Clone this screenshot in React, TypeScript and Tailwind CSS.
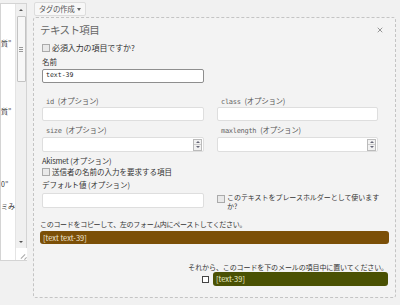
import { X } from "lucide-react";

const jp = { fontFamily: '"Noto Sans CJK JP", "Liberation Sans", sans-serif' };

function Check({ className = "" }: { className?: string }) {
  return <span className={"inline-block w-[8px] h-[8px] border border-[#aaa] bg-[#e9e9e9] shrink-0 " + className} />;
}

function Spinner() {
  return (
    <div className="ml-auto mr-[1px] flex flex-col w-[9px] h-[12px] border border-[#bbb] bg-[#f2f2f2]">
      <div className="flex-1 flex items-center justify-center border-b border-[#ccc]">
        <span className="w-0 h-0 border-l-[2px] border-r-[2px] border-b-[2px] border-l-transparent border-r-transparent border-b-[#667]" />
      </div>
      <div className="flex-1 flex items-center justify-center">
        <span className="w-0 h-0 border-l-[2px] border-r-[2px] border-t-[2px] border-l-transparent border-r-transparent border-t-[#667]" />
      </div>
    </div>
  );
}

function Field({ h = 14, spin = false }: { h?: number; spin?: boolean }) {
  return (
    <div
      className={
        "flex items-center bg-white border border-[#dedede] rounded-[2px] " + (h === 15 ? "h-[15px]" : "h-[14px]")
      }
    >
      {spin && <Spinner />}
    </div>
  );
}

function Label({ code }: { code: string }) {
  return (
    <div className="h-[10px] leading-[10px] text-[7.5px] text-[#555] tracking-[-0.3px] whitespace-nowrap pl-[4px]">
      <span style={{ fontFamily: '"DejaVu Sans Mono", monospace' }} className="text-[7px] text-[#666] mr-[4px]">
        {code}
      </span>
      (オプション)
    </div>
  );
}

function SideTextarea() {
  // 左側のテキストエリア（右端だけ見えている）
  const lines = [
    { y: "mt-[34px]", t: "質\u201d" },
    { y: "mt-[58px]", t: "質\u201d" },
    { y: "mt-[63px]", t: "0\u201d" },
    { y: "mt-[12px]", t: "ミみ" },
  ];
  return (
    <div className="relative w-[27px] h-[258px] mt-[3px] bg-white border border-[#d4d4d4] flex">
      <div className="w-[15px] overflow-hidden text-[7px] text-[#333] flex flex-col">
        {lines.map((l, i) => (
          <div key={i} className={"h-[10px] leading-[10px] whitespace-nowrap " + l.y}>
            {l.t}
          </div>
        ))}
      </div>
      <div className="w-[11px] bg-[#f0f0f0] border-l border-[#e4e4e4] flex flex-col items-center">
        <div className="h-[12px] flex items-center justify-center">
          <span className="w-0 h-0 border-l-[2px] border-r-[2px] border-b-[2px] border-l-transparent border-r-transparent border-b-[#555]" />
        </div>
        <div className="w-[9px] h-[66px] bg-[#f7f7f7] border border-[#c3c3c3] rounded-[1px] flex flex-col items-center justify-center gap-[1px]">
          <span className="w-[4px] h-px bg-[#999]" />
          <span className="w-[4px] h-px bg-[#999]" />
          <span className="w-[4px] h-px bg-[#999]" />
        </div>
        <div className="flex-1" />
        <div className="h-[12px] flex items-center justify-center">
          <span className="w-0 h-0 border-l-[2px] border-r-[2px] border-t-[2px] border-l-transparent border-r-transparent border-t-[#555]" />
        </div>
        <div className="h-[12px] w-[11px] bg-white relative overflow-hidden">
          <span className="absolute right-[1px] bottom-[3px] w-[6px] h-px bg-[#aaa] -rotate-45" />
          <span className="absolute right-[0px] bottom-[1px] w-[3px] h-px bg-[#aaa] -rotate-45" />
        </div>
      </div>
    </div>
  );
}

export default function App() {
  return (
    <div className="w-[400px] h-[305px] bg-[#f1f1f1] flex overflow-hidden text-[#333]" style={jp}>
      <SideTextarea />
      <div className="ml-[6px] w-[363px] flex flex-col">
        <div className="mt-[2px] ml-[1px] h-[14px] w-[52px] flex items-center justify-center gap-[3px] bg-[#f7f7f7] border border-[#ddd] rounded-[2px] text-[7.5px] text-[#555] tracking-[-0.4px]">
          タグの作成
          <span className="w-0 h-0 border-l-[2px] border-r-[2px] border-t-[3px] border-l-transparent border-r-transparent border-t-[#666]" />
        </div>
        <div className="mt-[1px] h-[281px] border border-dashed border-[#c4c4c4] rounded-[3px] bg-[#f3f3f3] flex flex-col pl-[6px] pr-[6px]">
          <div className="mt-[5px] h-[14px] flex items-center">
            <span className="text-[10.5px] leading-[14px] text-[#666] tracking-[-0.6px]">テキスト項目</span>
            <X className="ml-auto mr-[5px] w-[8px] h-[8px] text-[#666]" strokeWidth={2} />
          </div>
          <div className="mt-[6px] h-[10px] ml-[2px] flex items-center gap-[2px] text-[8px] tracking-[-0.1px] whitespace-nowrap">
            <Check />
            必須入力の項目ですか?
          </div>
          <div className="mt-[4px] h-[10px] leading-[10px] ml-[2px] text-[7.5px]">名前</div>
          <div className="mt-[2px] ml-[2px] w-[162px] h-[14px] bg-white border border-[#8e8e8e] rounded-[2px] flex items-center pl-[3px] text-[6.5px] text-[#222]" style={{ fontFamily: '"DejaVu Sans Mono", monospace' }}>
            text-39
          </div>
          <div className="mt-[13px] ml-[2px] grid grid-cols-[162px_161px] gap-x-[13px]">
            <Label code="id" />
            <Label code="class" />
            <div className="mt-[1px]"><Field /></div>
            <div className="mt-[1px]"><Field /></div>
            <div className="mt-[4px]"><Label code="size" /></div>
            <div className="mt-[4px]"><Label code="maxlength" /></div>
            <div className="mt-[2px]"><Field h={15} spin /></div>
            <div className="mt-[2px]"><Field h={15} spin /></div>
          </div>
          <div className="mt-[4px] h-[10px] leading-[10px] ml-[2px] text-[7.5px] tracking-[-0.2px]">Akismet (オプション)</div>
          <div className="mt-[1px] h-[10px] ml-[2px] flex items-center gap-[2px] text-[7.5px] whitespace-nowrap">
            <Check />
            送信者の名前の入力を要求する項目
          </div>
          <div className="mt-[3px] h-[10px] leading-[10px] ml-[2px] text-[7.5px] tracking-[-0.1px]">デフォルト値 (オプション)</div>
          <div className="mt-[3px] ml-[2px] grid grid-cols-[162px_161px] gap-x-[13px] h-[19px]">
            <Field h={15} />
            <div className="flex items-start gap-[2px] text-[7px] leading-[9px] tracking-[-0.05px] mt-[-1px] whitespace-nowrap">
              <Check className="mt-[3px]" />
              <span className="mt-[1px]">
                このテキストをプレースホルダーとして使います
                <br />
                か?
              </span>
            </div>
          </div>
          <div className="mt-[7px] h-[10px] leading-[10px] text-[7px] tracking-[-0.3px] whitespace-nowrap">
            このコードをコピーして、左のフォーム内にペーストしてください。
          </div>
          <div className="mt-[2px] w-[349px] h-[13px] rounded-[3px] bg-[#7b4f07] flex items-center pl-[3px] text-[7.5px] text-[#f0e6d2]">
            [text text-39]
          </div>
          <div className="mt-[18px] h-[10px] leading-[10px] w-[348px] text-right text-[7px] tracking-[-0.1px] whitespace-nowrap">
            それから、このコードを下のメールの項目中に置いてください。
          </div>
          <div className="mt-[0px] w-[348px] flex justify-end items-center gap-[4px]">
            <span className="w-[7px] h-[7px] border border-[#444] bg-white" />
            <div className="w-[175px] h-[14px] rounded-[3px] bg-[#4a5103] flex items-center pl-[3px] text-[7.5px] text-[#eaf0c8]">
              [text-39]
            </div>
          </div>
        </div>
      </div>
    </div>
  );
}
